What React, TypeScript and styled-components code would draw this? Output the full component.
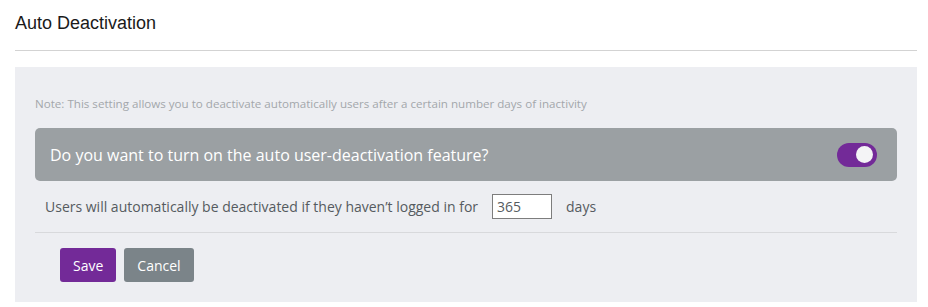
import React from "react";
import styled, { createGlobalStyle } from "styled-components";

const Global = createGlobalStyle`
  html, body { margin: 0; padding: 0; background: #ffffff; }
  body { font-family: "Open Sans", sans-serif; }
`;

const Page = styled.div`
  padding: 0 11px 0 15px;
  width: 928px;
  box-sizing: border-box;
`;

const Header = styled.div`
  height: 51px;
  border-bottom: 1px solid #d3d3d3;
  box-sizing: border-box;
  display: flex;
  align-items: flex-start;
`;

const Title = styled.h1`
  margin: 11px 0 0 0;
  font-family: "Liberation Sans", Arial, sans-serif;
  font-weight: 400;
  font-size: 18px;
  line-height: 24px;
  color: #1a1a1a;
`;

const Panel = styled.div`
  margin-top: 16px;
  background: #edeef2;
  padding: 29px 20px 20px 20px;
  display: flex;
  flex-direction: column;
`;

const Note = styled.p`
  margin: 0 0 16px 0;
  font-size: 11.6px;
  line-height: 16px;
  color: #a3a7ab;
`;

const FeatureBar = styled.div`
  height: 53px;
  background: #9ba0a3;
  border-radius: 5px;
  display: flex;
  align-items: center;
  justify-content: space-between;
  padding: 0 20px 0 15px;
`;

const Question = styled.span`
  font-size: 16px;
  color: #ffffff;
  line-height: 24px;
`;

const Toggle = styled.span<{ $on: boolean }>`
  width: 40px;
  height: 24px;
  border-radius: 12px;
  background: ${(p) => (p.$on ? "#732a98" : "#cccccc")};
  display: flex;
  align-items: center;
  justify-content: ${(p) => (p.$on ? "flex-end" : "flex-start")};
  padding: 0 4px;
  box-sizing: border-box;
`;

const Knob = styled.span`
  width: 17px;
  height: 17px;
  border-radius: 50%;
  background: #f4f4f6;
`;

const DaysRow = styled.div`
  display: flex;
  align-items: center;
  height: 51px;
  padding: 0 10px;
  border-bottom: 1px solid #d8d9dc;
  font-size: 14px;
  color: #555b60;
`;

const DaysInput = styled.input`
  width: 60px;
  height: 25px;
  box-sizing: border-box;
  margin: 0 14px 0 14px;
  border: 1px solid #7d7d7d;
  padding: 0 4px;
  font-family: "Open Sans", sans-serif;
  font-size: 14px;
  color: #555b60;
  background: #ffffff;
  outline: none;
`;

const Actions = styled.div`
  display: flex;
  gap: 8px;
  padding: 15px 25px 0 25px;
`;

const Button = styled.button<{ $variant: "primary" | "secondary" }>`
  height: 34px;
  padding: 0 13px;
  border: none;
  border-radius: 3px;
  font-family: "Open Sans", sans-serif;
  font-size: 14px;
  color: #ffffff;
  background: ${(p) => (p.$variant === "primary" ? "#732a98" : "#7b8489")};
  cursor: pointer;
`;

export default function App() {
  return (
    <>
      <Global />
      <Page>
        <Header>
          <Title>Auto Deactivation</Title>
        </Header>
        <Panel>
          <Note>
            Note: This setting allows you to deactivate automatically users after a certain number days of inactivity
          </Note>
          <FeatureBar>
            <Question>Do you want to turn on the auto user-deactivation feature?</Question>
            <Toggle $on={true}>
              <Knob />
            </Toggle>
          </FeatureBar>
          <DaysRow>
            <span>Users will automatically be deactivated if they haven’t logged in for</span>
            <DaysInput defaultValue="365" />
            <span>days</span>
          </DaysRow>
          <Actions>
            <Button $variant="primary">Save</Button>
            <Button $variant="secondary">Cancel</Button>
          </Actions>
        </Panel>
      </Page>
    </>
  );
}
